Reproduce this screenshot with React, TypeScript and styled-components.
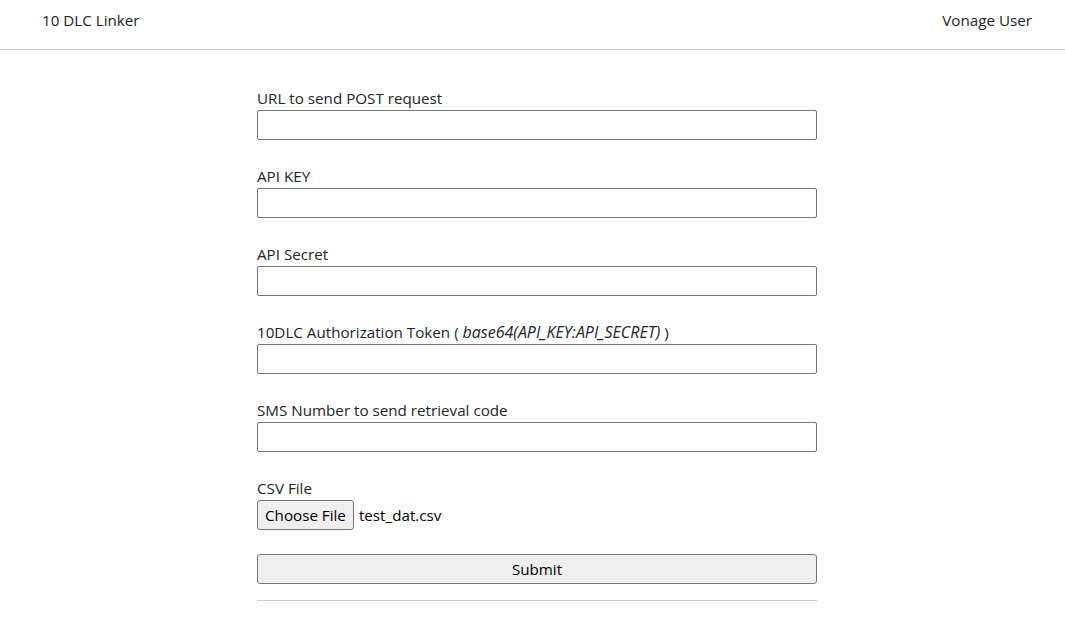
import styled, { createGlobalStyle } from "styled-components";

const GlobalStyle = createGlobalStyle`
	body {
		margin: 0;
		background: #fff;
		font-family: "Segoe UI", "Open Sans", "Noto Sans", sans-serif;
		color: #212529;
	}
`;

const fields = [
	{ id: "url", label: "URL to send POST request" },
	{ id: "key", label: "API KEY" },
	{ id: "secret", label: "API Secret" },
	{ id: "token", label: "10DLC Authorization Token", hint: "base64(API_KEY:API_SECRET)" },
	{ id: "sms", label: "SMS Number to send retrieval code" },
];

const App = () => {
	return (
		<>
			<GlobalStyle />
			<Header>
				<Brand>10 DLC Linker</Brand>
				<User>Vonage User</User>
			</Header>
			<Main>
				<Form onSubmit={(e) => e.preventDefault()}>
					{fields.map((f) => (
						<Field key={f.id}>
							<Label htmlFor={f.id}>
								{f.label}
								{f.hint && (
									<>
										{" ( "}
										<em>{f.hint}</em>
										{" )"}
									</>
								)}
							</Label>
							<Input id={f.id} type="text" />
						</Field>
					))}
					<Field>
						<Label>CSV File</Label>
						<FileRow>
							<FileButton type="button">Choose File</FileButton>
							<FileName>test_dat.csv</FileName>
						</FileRow>
					</Field>
					<SubmitButton type="submit">Submit</SubmitButton>
					<Rule />
				</Form>
			</Main>
		</>
	);
};

export default App;

const Header = styled.header`
	display: flex;
	justify-content: space-between;
	align-items: center;
	height: 50px;
	padding: 0 33px 9px 42px;
	box-sizing: border-box;
	border-bottom: 1px solid #cfcfcf;
	font-size: 15.2px;
`;

const Brand = styled.span``;

const User = styled.span``;

const Main = styled.main`
	display: flex;
	justify-content: center;
	padding: 38px 0 0 9px;
`;

const Form = styled.form`
	display: flex;
	flex-direction: column;
	width: 560px;
`;

const Field = styled.div`
	display: flex;
	flex-direction: column;
	margin-bottom: 26px;
`;

const Label = styled.label`
	font-size: 15.2px;
	line-height: 20px;
	padding-bottom: 2px;
	color: #212529;

	em {
		font-style: italic;
		font-size: 16px;
	}
`;

const Input = styled.input`
	height: 30px;
	box-sizing: border-box;
	border: 1px solid #767676;
	border-radius: 2px;
	padding: 0 6px;
	font-size: 15.2px;
	background: #fff;
`;

const FileRow = styled.div`
	display: flex;
	align-items: center;
	gap: 5px;
	height: 30px;
`;

const FileButton = styled.button`
	height: 30px;
	padding: 0 7px;
	box-sizing: border-box;
	border: 1px solid #767676;
	border-radius: 3px;
	background: #efefef;
	font-family: inherit;
	font-size: 15.2px;
	color: #000;
`;

const FileName = styled.span`
	font-size: 15.2px;
	color: #000;
`;

const SubmitButton = styled.button`
	height: 30px;
	box-sizing: border-box;
	border: 1px solid #767676;
	border-radius: 3px;
	background: #efefef;
	font-family: inherit;
	font-size: 15.2px;
	color: #000;
	margin-top: -2px;
`;

const Rule = styled.hr`
	margin: 16px 0 0;
	border: 0;
	border-top: 1px solid #cfcfcf;
`;
